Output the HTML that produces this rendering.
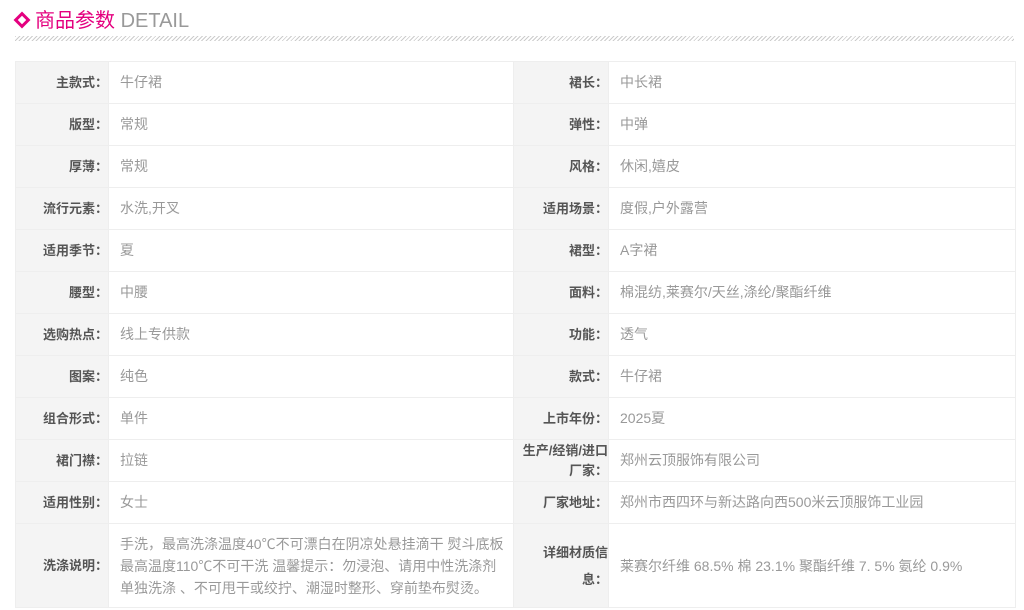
<!DOCTYPE html>
<html><head><meta charset="utf-8"><style>
body{margin:0;background:#fff;width:1024px;height:610px;overflow:hidden;font-family:"Liberation Sans","Noto Sans CJK SC",sans-serif}
.hd{position:absolute;left:15px;top:6px;height:30px;font-size:20px;line-height:30px;color:#e4007f}
.hd .dm{display:inline-block;width:6px;height:6px;border:3px solid #e4007f;transform:rotate(45deg);margin:0 7px 3px 1px;vertical-align:middle}
.hd .en{color:#999}
.hatch{position:absolute;left:15px;top:36px;width:999px;height:5px;background:repeating-linear-gradient(135deg,#ccc 0 1px,#fff 1px 3px)}
table{position:absolute;left:15px;top:61px;border-collapse:collapse;table-layout:fixed;width:1000px}
td{border:1px solid #eee;font-size:14px;height:41px;padding:0;line-height:17px}
td.l{background:#f4f4f4;color:#555;font-weight:bold;text-align:right;padding-right:0;font-size:13px}
td.v{color:#999;padding-left:11px}
tr.big td{height:83px;line-height:22px}
</style></head><body>
<div class="hd"><span class="dm"></span>商品参数 <span class="en">DETAIL</span></div>
<div class="hatch"></div>
<table>
<colgroup><col style="width:93px"><col style="width:405px"><col style="width:95px"><col style="width:407px"></colgroup>
<tr><td class="l">主款式：</td><td class="v">牛仔裙</td><td class="l">裙长：</td><td class="v">中长裙</td></tr>
<tr><td class="l">版型：</td><td class="v">常规</td><td class="l">弹性：</td><td class="v">中弹</td></tr>
<tr><td class="l">厚薄：</td><td class="v">常规</td><td class="l">风格：</td><td class="v">休闲,嬉皮</td></tr>
<tr><td class="l">流行元素：</td><td class="v">水洗,开叉</td><td class="l">适用场景：</td><td class="v">度假,户外露营</td></tr>
<tr><td class="l">适用季节：</td><td class="v">夏</td><td class="l">裙型：</td><td class="v">A字裙</td></tr>
<tr><td class="l">腰型：</td><td class="v">中腰</td><td class="l">面料：</td><td class="v">棉混纺,莱赛尔/天丝,涤纶/聚酯纤维</td></tr>
<tr><td class="l">选购热点：</td><td class="v">线上专供款</td><td class="l">功能：</td><td class="v">透气</td></tr>
<tr><td class="l">图案：</td><td class="v">纯色</td><td class="l">款式：</td><td class="v">牛仔裙</td></tr>
<tr><td class="l">组合形式：</td><td class="v">单件</td><td class="l">上市年份：</td><td class="v">2025夏</td></tr>
<tr><td class="l">裙门襟：</td><td class="v">拉链</td><td class="l" style="padding-left:1px;line-height:20px">生产/经销/进口厂家：</td><td class="v">郑州云顶服饰有限公司</td></tr>
<tr><td class="l">适用性别：</td><td class="v">女士</td><td class="l">厂家地址：</td><td class="v">郑州市西四环与新达路向西500米云顶服饰工业园</td></tr>
<tr class="big"><td class="l">洗涤说明：</td><td class="v" style="padding-right:8px">手洗，最高洗涤温度40℃不可漂白在阴凉处悬挂滴干 熨斗底板最高温度110℃不可干洗 温馨提示：勿浸泡、请用中性洗涤剂单独洗涤 、不可甩干或绞拧、潮湿时整形、穿前垫布熨烫。</td><td class="l" style="line-height:27px;padding-left:2px">详细材质信<br>息：</td><td class="v">莱赛尔纤维 68.5% 棉 23.1% 聚酯纤维 7. 5% 氨纶 0.9%</td></tr>
</table>
</body></html>
